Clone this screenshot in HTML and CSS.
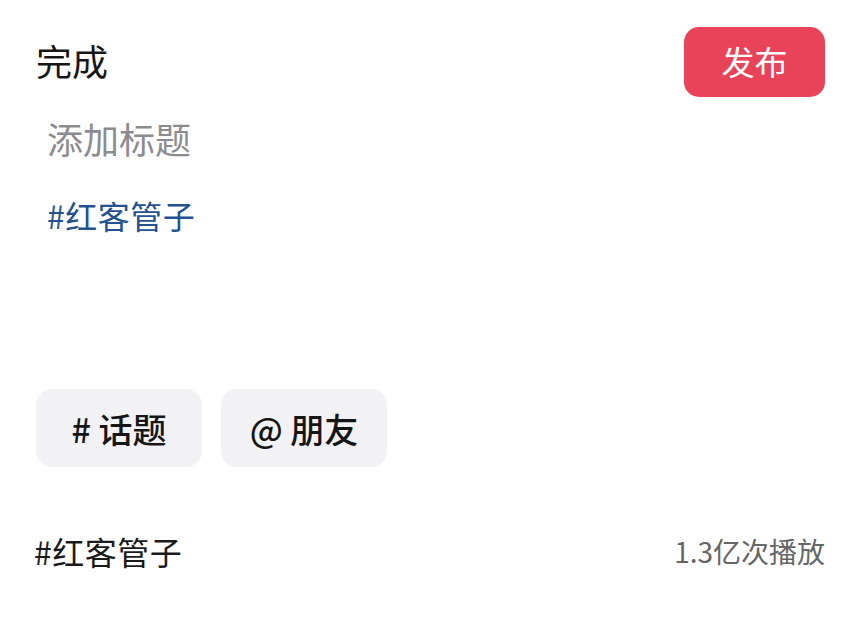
FILE: index.html
```html
<!DOCTYPE html>
<html lang="zh">
<head>
    <meta charset="UTF-8">
    <meta name="viewport" content="width=device-width, initial-scale=1.0">
    <title>发布</title>
    <link rel="stylesheet" href="styles.css">
</head>
<body>
    <div class="page">
        <div class="header">
            <span class="done">完成</span>
            <button class="publish">发布</button>
        </div>
        <div class="title">添加标题</div>
        <div class="tag">#红客管子</div>

        <div class="chips">
            <div class="chip"># 话题</div>
            <div class="chip">@ 朋友</div>
        </div>

        <div class="topic-row">
            <span class="topic-name">#红客管子</span>
            <span class="topic-plays">1.3亿次播放</span>
        </div>
    </div>
</body>
</html>
```

FILE: styles.css
```css
body {
    margin: 0;
    background: #fff;
    font-family: "Noto Sans CJK SC", "Noto Sans", sans-serif;
    color: #161616;
}
.page {
    padding: 27px 35px 0 36px;
}
.header {
    display: flex;
    justify-content: space-between;
    align-items: center;
    height: 70px;
}
.done {
    font-size: 36px;
    line-height: 1;
    margin-bottom: 5px;
}
.publish {
    width: 141px;
    height: 70px;
    border: none;
    border-radius: 15px;
    background: #e9435a;
    color: #fff;
    font-family: inherit;
    font-size: 33px;
    padding: 0 0 3px;
}
.title {
    margin-top: 16px;
    padding-left: 11px;
    font-size: 36px;
    line-height: 50px;
    color: #8b8b90;
}
.tag {
    margin-top: 30px;
    padding-left: 11px;
    font-size: 32px;
    letter-spacing: 0.5px;
    line-height: 44px;
    color: #24518f;
}
.chips {
    display: flex;
    gap: 19px;
    margin-top: 152px;
}
.chip {
    width: 166px;
    height: 78px;
    display: flex;
    align-items: center;
    justify-content: center;
    background: #f2f2f5;
    border-radius: 16px;
    font-size: 34px;
    font-weight: 500;
    color: #161616;
}
.topic-row {
    display: flex;
    justify-content: space-between;
    align-items: center;
    margin-top: 62px;
    margin-left: -2px;
    line-height: 44px;
}
.topic-name {
    font-size: 32px;
    letter-spacing: 0.5px;
    color: #1a1a1a;
}
.topic-plays {
    font-size: 28px;
    color: #666;
}
```
